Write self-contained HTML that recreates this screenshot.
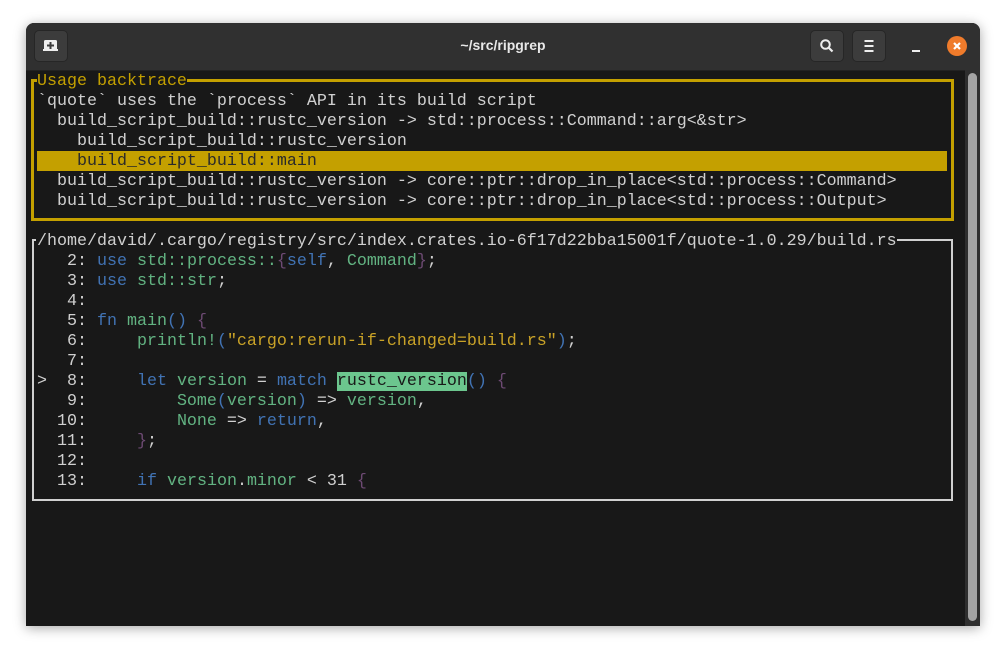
<!DOCTYPE html>
<html><head><meta charset="utf-8"><style>
body{margin:0;width:1006px;height:654px;background:#fff;position:relative;overflow:hidden;font-family:"Liberation Sans",sans-serif}
.win{position:absolute;left:26px;top:23px;width:954px;height:603px;background:#181818;border-radius:8px 8px 0 0;box-shadow:0 2px 12px rgba(0,0,0,.35);overflow:hidden}
.hdr{position:absolute;left:0;top:0;width:954px;height:47px;background:#303030;border-bottom:1px solid #222}
.btn{position:absolute;top:7px;width:34px;height:32px;background:#3c3c3c;border-radius:5px;border:1px solid #262626;box-sizing:border-box}
.title{position:absolute;left:0;width:954px;top:14px;text-align:center;color:#e8e8e8;font-weight:bold;font-size:14px}
.t{position:absolute;left:11px;top:49px;font-family:"Liberation Mono",monospace;font-size:16.67px;line-height:20px;color:#d0d0d0}
.row{height:20px;white-space:pre}
.y{color:#c4a000}.b{color:#4173b4}.g{color:#62b382}.p{color:#6d4a73}.s{color:#c9a227}
.hl{background:#6cc68e;color:#181818}
</style></head><body>
<div class="win">
<div class="hdr">
<div class="btn" style="left:8px"><svg width="32" height="30" viewBox="0 0 32 30"><rect x="9" y="9" width="13" height="11" rx="1.5" fill="#eee"/><rect x="8" y="18" width="15" height="2" fill="#eee"/><path d="M15.5 11v7M12 14.5h7" stroke="#3c3c3c" stroke-width="2"/></svg></div>
<div class="title">~/src/ripgrep</div>
<div class="btn" style="left:784px"><svg width="32" height="30" viewBox="0 0 32 30"><circle cx="14.5" cy="13.5" r="4.3" fill="none" stroke="#eee" stroke-width="2"/><path d="M17.5 16.5l4 4" stroke="#eee" stroke-width="2.2"/></svg></div>
<div class="btn" style="left:826px"><svg width="32" height="30" viewBox="0 0 32 30"><path d="M11.5 10h9M11.5 15h9M11.5 20h9" stroke="#eee" stroke-width="2"/></svg></div>
<div style="position:absolute;left:886px;top:27px;width:8px;height:2px;background:#eee"></div>
<div style="position:absolute;left:921px;top:13px;width:20px;height:20px;border-radius:50%;background:#ef7b2b"><svg width="20" height="20"><path d="M7 7l6 6M13 7l-6 6" stroke="#fff" stroke-width="2.2"/></svg></div>
</div>
<div style="position:absolute;left:5px;top:56px;width:923px;height:142px;border:3px solid #c4a000;box-sizing:border-box"></div>
<div style="position:absolute;left:11px;top:128px;width:910px;height:20px;background:#c4a000"></div>
<div style="position:absolute;left:6px;top:216px;width:921px;height:262px;border:2px solid #d0d0d0;border-top:none;box-sizing:border-box"></div>
<div style="position:absolute;left:6px;top:216px;width:4px;height:2px;background:#d0d0d0"></div>
<div style="position:absolute;left:871px;top:216px;width:56px;height:2px;background:#d0d0d0"></div>
<div style="position:absolute;left:939px;top:47px;width:15px;height:556px;background:#2e2e2e"></div>
<div style="position:absolute;left:942px;top:50px;width:9px;height:548px;background:#a3a3a3;border-radius:5px"></div>
<div class="t"><div class="row"><span class="y" style="background:#181818">Usage backtrace</span></div><div class="row">`quote` uses the `process` API in its build script</div><div class="row">  build_script_build::rustc_version -&gt; std::process::Command::arg&lt;&amp;str&gt;</div><div class="row">    build_script_build::rustc_version</div><div class="row" style="color:#2a2a2a">    build_script_build::main</div><div class="row">  build_script_build::rustc_version -&gt; core::ptr::drop_in_place&lt;std::process::Command&gt;</div><div class="row">  build_script_build::rustc_version -&gt; core::ptr::drop_in_place&lt;std::process::Output&gt;</div><div class="row"> </div><div class="row"><span style="background:#181818">/home/david/.cargo/registry/src/index.crates.io-6f17d22bba15001f/quote-1.0.29/build.rs</span></div><div class="row">   2: <span class="b">use</span> <span class="g">std::process::</span><span class="p">{</span><span class="b">self</span>, <span class="g">Command</span><span class="p">}</span>;</div><div class="row">   3: <span class="b">use</span> <span class="g">std::str</span>;</div><div class="row">   4:</div><div class="row">   5: <span class="b">fn</span> <span class="g">main</span><span class="b">()</span> <span class="p">{</span></div><div class="row">   6:     <span class="g">println!</span><span class="b">(</span><span class="s">"cargo:rerun-if-changed=build.rs"</span><span class="b">)</span>;</div><div class="row">   7:</div><div class="row">&gt;  8:     <span class="b">let</span> <span class="g">version</span> = <span class="b">match</span> <span class="hl">rustc_version</span><span class="b">()</span> <span class="p">{</span></div><div class="row">   9:         <span class="g">Some</span><span class="b">(</span><span class="g">version</span><span class="b">)</span> =&gt; <span class="g">version</span>,</div><div class="row">  10:         <span class="g">None</span> =&gt; <span class="b">return</span>,</div><div class="row">  11:     <span class="p">}</span>;</div><div class="row">  12:</div><div class="row">  13:     <span class="b">if</span> <span class="g">version</span>.<span class="g">minor</span> &lt; 31 <span class="p">{</span></div></div>
</div>
</body></html>
